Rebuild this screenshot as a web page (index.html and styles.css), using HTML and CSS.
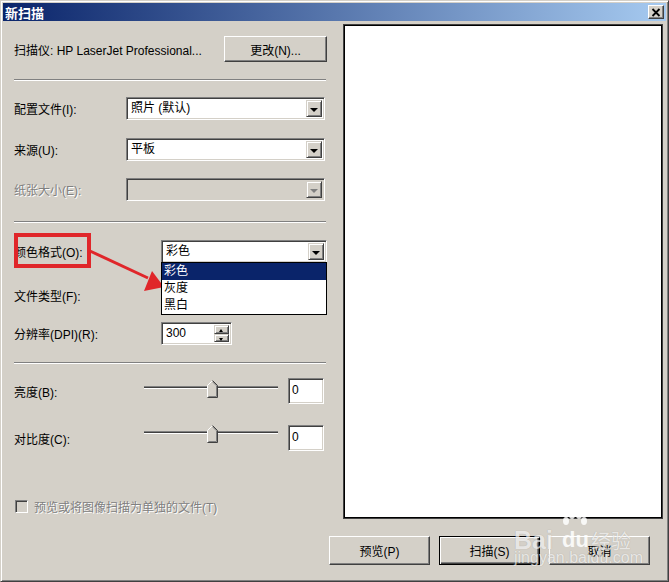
FILE: index.html
```html
<!DOCTYPE html>
<html lang="zh-CN">
<head>
<meta charset="UTF-8">
<title>新扫描</title>
<link rel="stylesheet" href="styles.css">
</head>
<body>

<div class="window">
    <div class="titlebar">
        <span class="title">新扫描</span>
        <span class="close-btn">
            <svg width="10" height="9" viewBox="0 0 10 9"><path d="M1.5 1 L8.5 8 M8.5 1 L1.5 8" stroke="#000" stroke-width="1.8" fill="none"/></svg>
        </span>
    </div>

    <div class="client">
        <div class="settings">
            <div class="row scanner-row">
                <span>扫描仪: HP LaserJet Professional...</span>
                <button class="btn change-btn">更改(N)...</button>
            </div>

            <div class="separator"></div>

            <div class="row field profile-row">
                <label class="label">配置文件(I):</label>
                <div class="combo wide"><span class="combo-value">照片 (默认)</span><span class="combo-arrow"></span></div>
            </div>

            <div class="row field source-row">
                <label class="label">来源(U):</label>
                <div class="combo wide"><span class="combo-value">平板</span><span class="combo-arrow"></span></div>
            </div>

            <div class="row field paper-row">
                <label class="label disabled">纸张大小(E):</label>
                <div class="combo wide disabled"><span class="combo-value"></span><span class="combo-arrow"></span></div>
            </div>

            <div class="separator sep-2"></div>

            <div class="row field color-row">
                <label class="label long">颜色格式(O):</label>
                <div class="combo narrow">
                    <span class="combo-value">彩色</span><span class="combo-arrow"></span>
                    <ul class="dropdown">
                        <li class="selected">彩色</li>
                        <li>灰度</li>
                        <li>黑白</li>
                    </ul>
                </div>
            </div>

            <div class="row field type-row">
                <label class="label long">文件类型(F):</label>
                <!-- combo is hidden behind the open list -->
                <div class="combo narrow"><span class="combo-value"></span><span class="combo-arrow"></span></div>
            </div>

            <div class="row field dpi-row">
                <label class="label long">分辨率(DPI)(R):</label>
                <div class="spin">
                    <span class="combo-value">300</span>
                    <span class="spin-buttons">
                        <span class="spin-btn up"></span>
                        <span class="spin-btn down"></span>
                    </span>
                </div>
            </div>

            <div class="separator sep-3"></div>

            <div class="row slider-row brightness-row">
                <label class="label short">亮度(B):</label>
                <div class="slider">
                    <div class="track"></div>
                    <svg class="thumb" width="11" height="18" viewBox="0 0 11 18">
                        <polygon points="0.5,5.5 5.5,0.5 10.5,5.5 10.5,17.5 0.5,17.5" fill="#d4d0c8"/>
                        <polyline points="0.5,17 0.5,5.5 5.5,0.5" stroke="#fff" fill="none"/>
                        <polyline points="5.5,0.5 10.5,5.5 10.5,17.5 0.5,17.5" stroke="#404040" fill="none"/>
                        <polyline points="5.5,1.8 9.5,5.8 9.5,16.5 1.5,16.5" stroke="#808080" fill="none"/>
                    </svg>
                </div>
                <div class="textbox">0</div>
            </div>

            <div class="row slider-row contrast-row">
                <label class="label short">对比度(C):</label>
                <div class="slider">
                    <div class="track"></div>
                    <svg class="thumb" width="11" height="18" viewBox="0 0 11 18">
                        <polygon points="0.5,5.5 5.5,0.5 10.5,5.5 10.5,17.5 0.5,17.5" fill="#d4d0c8"/>
                        <polyline points="0.5,17 0.5,5.5 5.5,0.5" stroke="#fff" fill="none"/>
                        <polyline points="5.5,0.5 10.5,5.5 10.5,17.5 0.5,17.5" stroke="#404040" fill="none"/>
                        <polyline points="5.5,1.8 9.5,5.8 9.5,16.5 1.5,16.5" stroke="#808080" fill="none"/>
                    </svg>
                </div>
                <div class="textbox">0</div>
            </div>

            <div class="row checkbox-row">
                <span class="checkbox"></span>
                <span class="label disabled">预览或将图像扫描为单独的文件(T)</span>
            </div>
        </div>

        <div class="preview"></div>

        <div class="button-row">
            <button class="btn">预览(P)</button>
            <button class="btn default">扫描(S)</button>
            <button class="btn">取消</button>
        </div>
    </div>

    <!-- annotation drawn over the screenshot -->
    <div class="mark-box"></div>
    <svg class="mark-arrow" width="100" height="60" viewBox="0 0 100 60">
        <line x1="4" y1="6" x2="62" y2="33" stroke="#e0262a" stroke-width="3"/>
        <polygon points="78,42 58,46 66,26" fill="#e0262a"/>
    </svg>

    <!-- watermark -->
    <div class="watermark">
        <span class="wm-bai">Bai</span>
        <svg class="wm-paw" width="28" height="40" viewBox="0 0 28 40">
            <ellipse cx="6" cy="10" rx="3" ry="4" fill="#fff"/>
            <ellipse cx="12" cy="4" rx="3" ry="4" fill="#fff"/>
            <ellipse cx="19" cy="4" rx="3" ry="4" fill="#fff"/>
            <ellipse cx="24" cy="10" rx="3" ry="4" fill="#fff"/>
            <text x="2" y="36" font-size="22" font-weight="bold" fill="#fff" font-family="Liberation Sans">du</text>
        </svg>
        <span class="wm-jy">经验</span>
        <span class="wm-url">jingyan.baidu.com</span>
    </div>
</div>

</body>
</html>
```

FILE: styles.css
```css
* {
    box-sizing: border-box;
}

body {
    margin: 0;
    background-color: #d4d0c8;
    font-family: "Liberation Sans", "Noto Sans CJK SC", sans-serif;
    font-size: 12px;
    color: #000;
}

.window {
    position: relative;
    width: 669px;
    height: 582px;
    background-color: #d4d0c8;
    border: 1px solid;
    border-color: #d4d0c8 #404040 #404040 #d4d0c8;
    padding: 2px;
    box-shadow: inset 1px 1px #fff, inset -1px -1px #808080;
}

.titlebar {
    height: 18px;
    display: flex;
    align-items: center;
    padding: 0 2px 0 2px;
    background: linear-gradient(to right, #0a246a, #a6caf0);
}

.title {
    color: #fff;
    font-weight: bold;
    font-size: 13px;
    font-family: "Noto Sans CJK SC", sans-serif;
}

.close-btn {
    margin-left: auto;
    width: 16px;
    height: 14px;
    display: flex;
    align-items: center;
    justify-content: center;
    background-color: #d4d0c8;
    border: 1px solid;
    border-color: #fff #404040 #404040 #fff;
    box-shadow: inset -1px -1px #808080;
}

.client {
    display: grid;
    grid-template-columns: 337px 326px;
}

.settings {
    padding: 15px 0 0 11px;
}

.row {
    display: flex;
    align-items: center;
}

.label {
    flex-shrink: 0;
    white-space: nowrap;
}

.disabled {
    color: #808080;
    text-shadow: 1px 1px #fff;
}

.scanner-row {
    width: 313px;
    height: 26px;
    justify-content: space-between;
}

.btn {
    background-color: #d4d0c8;
    border: 1px solid;
    border-color: #fff #404040 #404040 #fff;
    box-shadow: inset -1px -1px #808080;
    font: inherit;
    color: #000;
    padding: 0;
}

.change-btn {
    width: 103px;
    height: 26px;
}

.separator {
    width: 312px;
    height: 2px;
    border-top: 1px solid #808080;
    border-bottom: 1px solid #fff;
    margin-top: 17px;
}

.sep-2 {
    margin-top: 20px;
}

.sep-3 {
    margin-top: 17px;
}

.field {
    height: 23px;
}

.field .label {
    width: 112px;
}

.field .label.long {
    width: 147px;
}

.profile-row {
    margin-top: 16px;
}

.source-row {
    margin-top: 18px;
}

.paper-row {
    margin-top: 17px;
}

.color-row {
    margin-top: 17px;
}

.type-row {
    margin-top: 21px;
}

.dpi-row {
    margin-top: 15px;
}

.combo,
.spin {
    position: relative;
    display: flex;
    height: 23px;
    background-color: #fff;
    border: 1px solid;
    border-color: #808080 #fff #fff #808080;
    box-shadow: inset 1px 1px #404040, inset -1px -1px #d4d0c8;
    padding: 2px;
}

.combo.wide {
    width: 199px;
}

.combo.narrow {
    width: 166px;
}

.combo.disabled {
    background-color: #d4d0c8;
}

.combo-value {
    flex: 1;
    line-height: 17px;
    padding-left: 2px;
    white-space: nowrap;
}

.combo-arrow {
    position: relative;
    width: 16px;
    background-color: #d4d0c8;
    border: 1px solid;
    border-color: #d4d0c8 #404040 #404040 #d4d0c8;
    box-shadow: inset 1px 1px #fff, inset -1px -1px #808080;
}

.combo-arrow::after {
    content: "";
    position: absolute;
    left: 3px;
    top: 7px;
    border-top: 4px solid #000;
    border-left: 4px solid transparent;
    border-right: 4px solid transparent;
}

.combo.disabled .combo-arrow::after {
    border-top-color: #808080;
}

.dropdown {
    position: absolute;
    top: 21px;
    left: -1px;
    width: 166px;
    margin: 0;
    padding: 0;
    list-style: none;
    background-color: #fff;
    border: 1px solid #000;
    z-index: 2;
}

.dropdown li {
    height: 17px;
    line-height: 17px;
    padding-left: 2px;
}

.dropdown li.selected {
    background-color: #0a246a;
    color: #fff;
}

.spin {
    width: 71px;
}

.spin-buttons {
    width: 15px;
    display: flex;
    flex-direction: column;
}

.spin-btn {
    position: relative;
    flex: 1;
    background-color: #d4d0c8;
    border: 1px solid;
    border-color: #d4d0c8 #404040 #404040 #d4d0c8;
    box-shadow: inset 1px 1px #fff, inset -1px -1px #808080;
}

.spin-btn::after {
    content: "";
    position: absolute;
    left: 4px;
    top: 3px;
    border-left: 2.5px solid transparent;
    border-right: 2.5px solid transparent;
}

.spin-btn.up::after {
    border-bottom: 3px solid #000;
}

.spin-btn.down::after {
    border-top: 3px solid #000;
}

.slider-row {
    height: 26px;
}

.slider-row .label {
    width: 130px;
}

.brightness-row {
    margin-top: 14px;
}

.contrast-row {
    margin-top: 21px;
}

.slider {
    position: relative;
    align-self: flex-start;
    margin-top: 2px;
    width: 134px;
    height: 18px;
}

.contrast-row .slider {
    margin-top: 0;
}

.track {
    position: absolute;
    left: 0;
    right: 0;
    top: 6px;
    height: 3px;
    border-top: 1px solid #808080;
    border-bottom: 1px solid #fff;
    background-color: #404040;
}

.thumb {
    position: absolute;
    left: 63px;
    top: 0;
}

.textbox {
    margin-left: 10px;
    width: 36px;
    height: 26px;
    background-color: #fff;
    border: 1px solid;
    border-color: #808080 #fff #fff #808080;
    box-shadow: inset 1px 1px #404040, inset -1px -1px #d4d0c8;
    padding: 4px 0 0 3px;
}

.checkbox-row {
    margin-top: 49px;
    height: 13px;
}

.checkbox {
    width: 13px;
    height: 13px;
    margin-left: 1px;
    margin-right: 6px;
    background-color: #d4d0c8;
    border: 1px solid;
    border-color: #808080 #fff #fff #808080;
    box-shadow: inset 1px 1px #404040, inset -1px -1px #d4d0c8;
}

.preview {
    margin: 3px 3px 0 3px;
    height: 495px;
    background-color: #fff;
    border: 1px solid #404040;
    box-shadow: inset 0 0 0 1px #000;
}

.button-row {
    grid-column: 1 / -1;
    display: flex;
    justify-content: flex-end;
    gap: 9px;
    margin-top: 17px;
    padding-right: 16px;
}

.button-row .btn {
    width: 101px;
    height: 29px;
}

.btn.default {
    border-color: #000;
    box-shadow: inset 1px 1px #fff, inset -1px -1px #404040, inset -2px -2px #808080;
}

.mark-box {
    position: absolute;
    left: 13px;
    top: 232px;
    width: 77px;
    height: 35px;
    border: 4px solid #e0262a;
}

.mark-arrow {
    position: absolute;
    left: 85px;
    top: 244px;
}

.watermark {
    position: absolute;
    left: 513px;
    top: 508px;
    width: 130px;
    height: 60px;
    color: rgba(255, 255, 255, 0.8);
    opacity: 0.85;
    pointer-events: none;
}

.wm-bai {
    position: absolute;
    left: 0;
    top: 17px;
    font-size: 25px;
    font-weight: bold;
    text-shadow: 0 0 1px rgba(0, 0, 0, 0.25);
}

.wm-paw {
    position: absolute;
    left: 46px;
    top: 2px;
}

.wm-jy {
    position: absolute;
    left: 77px;
    top: 17px;
    font-size: 20px;
    font-family: "Noto Sans CJK SC", sans-serif;
    text-shadow: 0 0 1px rgba(0, 0, 0, 0.25);
}

.wm-url {
    position: absolute;
    left: 0;
    top: 40px;
    font-size: 16px;
    text-shadow: 0 0 1px rgba(0, 0, 0, 0.25);
}
```
